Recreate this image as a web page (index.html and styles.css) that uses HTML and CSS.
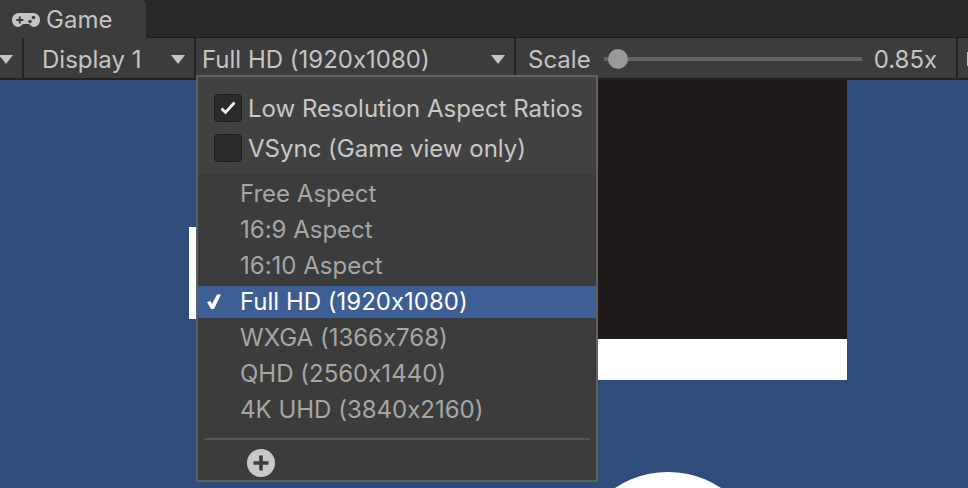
FILE: index.html
```html
<!DOCTYPE html>
<html lang="en">
<head>
    <meta charset="UTF-8">
    <title>Game</title>
    <link rel="stylesheet" href="styles.css">
</head>
<body>
    <div class="tabbar">
        <div class="tab">
            <svg class="tab-icon" width="28" height="16" viewBox="0 0 28 16">
                <path fill="#c4c4c4" d="M7 1h14c4 0 7 3 7 7s-3 7-6 7c-2 0-3-1-5-3h-6c-2 2-3 3-5 3-3 0-6-3-6-7s3-7 7-7z"/>
                <path fill="#3c3c3c" d="M6.800 4.500h2v2.500h2.500v2h-2.500v2.500h-2v-2.500h-2.500v-2h2.500z"/>
                <circle fill="#3c3c3c" cx="21.500" cy="5.500" r="1.800"/>
                <circle fill="#3c3c3c" cx="18" cy="9.500" r="1.800"/>
            </svg>
            <span>Game</span>
        </div>
    </div>

    <div class="toolbar">
        <div class="tool tool-first"><span class="arrow"></span></div>
        <div class="tool tool-display">
            <span>Display 1</span>
            <span class="arrow"></span>
        </div>
        <div class="tool tool-res">
            <span>Full HD (1920x1080)</span>
            <span class="arrow"></span>
        </div>
        <div class="tool tool-scale">
            <span>Scale</span>
            <div class="slider"><div class="slider-thumb"></div></div>
            <span>0.85x</span>
        </div>
        <div class="tool tool-last"><span class="stub"></span></div>
    </div>

    <div class="view">
        <div class="canvas">
            <div class="shape shape-bar"></div>
            <div class="shape shape-panel"></div>
            <div class="shape shape-circle"></div>
        </div>

        <div class="menu">
            <div class="menu-options">
                <div class="option">
                    <span class="checkbox">
                        <svg width="20" height="18" viewBox="0 0 20 18"><path d="M3.500 9.500l4 4 9-10" fill="none" stroke="#eeeeee" stroke-width="2.800"/></svg>
                    </span>
                    <span class="option-label">Low Resolution Aspect Ratios</span>
                </div>
                <div class="option">
                    <span class="checkbox"></span>
                    <span class="option-label">VSync (Game view only)</span>
                </div>
            </div>
            <div class="menu-list">
                <div class="item">Free Aspect</div>
                <div class="item">16:9 Aspect</div>
                <div class="item">16:10 Aspect</div>
                <div class="item item-active">
                    <svg class="item-check" width="16" height="18" viewBox="0 0 16 18"><path d="M1 9l3.500-1 1.500 3 5-9.500h4l-7 14.500h-3z" fill="#ffffff"/></svg>
                    Full HD (1920x1080)
                </div>
                <div class="item">WXGA (1366x768)</div>
                <div class="item">QHD (2560x1440)</div>
                <div class="item">4K UHD (3840x2160)</div>
            </div>
            <div class="menu-sep"></div>
            <div class="menu-add">
                <svg width="28" height="28" viewBox="0 0 28 28">
                    <circle cx="14" cy="14" r="14" fill="#c8c8c8"/>
                    <path d="M14 6.500v15M6.500 14h15" stroke="#3c3c3c" stroke-width="3.600"/>
                </svg>
            </div>
        </div>
    </div>
</body>
</html>
```

FILE: styles.css
```css
/* Общие стили */
html, body {
    margin: 0;
    height: 488px;
    overflow: hidden;
}

body {
    display: flex;
    flex-direction: column;
    background: #2f4d7a;
    font-family: 'Inter', 'Noto Sans', sans-serif;
    font-size: 24px;
    font-feature-settings: "calt" 0;
    color: #c4c4c4;
}

/* Вкладка */
.tabbar {
    height: 37px;
    background: #282828;
    border-bottom: 1px solid #1e1e1e;
    display: flex;
    flex-shrink: 0;
}

.tab {
    width: 146px;
    height: 38px;
    box-sizing: border-box;
    padding-left: 12px;
    padding-top: 2px;
    display: flex;
    align-items: center;
    gap: 6px;
    background: #3c3c3c;
    border-top-right-radius: 5px;
    line-height: 1;
}

/* Панель инструментов */
.toolbar {
    height: 40px;
    background: #3c3c3c;
    border-bottom: 2px solid #232323;
    display: flex;
    flex-shrink: 0;
}

.tool {
    display: flex;
    flex-shrink: 0;
    align-items: center;
    box-sizing: border-box;
    padding-top: 2px;
    border-right: 2px solid #232323;
}

.tool-first {
    width: 24px;
}

.tool-display {
    width: 172px;
    padding-left: 18px;
    padding-right: 9px;
    justify-content: space-between;
}

.tool-res {
    width: 320px;
    padding-left: 6px;
    padding-right: 9px;
    justify-content: space-between;
}

.tool-scale {
    width: 442px;
    padding-left: 12px;
}

.tool-last {
    flex: 1;
    flex-shrink: 1;
    border-right: none;
    padding-left: 9px;
}

.stub {
    width: 12px;
    height: 14px;
    background: #c4c4c4;
}

.arrow {
    width: 0;
    height: 0;
    border-left: 7px solid transparent;
    border-right: 7px solid transparent;
    border-top: 9px solid #c4c4c4;
}

.tool-first .arrow {
    margin-left: -1px;
}

.slider {
    width: 258px;
    height: 4px;
    margin-left: 13px;
    margin-right: 12px;
    background: #636363;
    display: flex;
    align-items: center;
}

.slider-thumb {
    width: 20px;
    height: 20px;
    margin-left: 4px;
    border-radius: 50%;
    background: #999999;
}

/* Игровой вид */
.view {
    flex: 1;
    position: relative;
}

.canvas {
    position: absolute;
    inset: 0;
    overflow: hidden;
}

.shape {
    position: absolute;
}

.shape-bar {
    left: 189px;
    top: 147px;
    width: 20px;
    height: 92px;
    background: #ffffff;
}

.shape-panel {
    left: 560px;
    top: 0;
    width: 287px;
    height: 259px;
    background: #1f1b1b;
    border-bottom: 41px solid #ffffff;
}

.shape-circle {
    left: 572px;
    top: 392px;
    width: 192px;
    height: 192px;
    border-radius: 50%;
    background: #ffffff;
}

/* Выпадающее меню */
.menu {
    position: absolute;
    left: 196px;
    top: -5px;
    width: 402px;
    height: 407px;
    box-sizing: border-box;
    border: 2px solid #606060;
    background: #3c3c3c;
}

.menu-options {
    padding: 11px 16px 0;
    height: 97px;
    box-sizing: border-box;
    background: #414141;
}

.option {
    height: 40px;
    display: flex;
    align-items: center;
    gap: 6px;
}

.checkbox {
    width: 28px;
    height: 28px;
    flex-shrink: 0;
    box-sizing: border-box;
    display: flex;
    align-items: center;
    justify-content: center;
    background: #2a2a2a;
    border: 1px solid #1e1e1e;
    border-radius: 4px;
}

.option-label {
    color: #c8c8c8;
    white-space: nowrap;
}

.menu-list {
    padding-top: 4px;
    display: flex;
    flex-direction: column;
    gap: 4px;
}

.item {
    height: 32px;
    box-sizing: border-box;
    padding-left: 42px;
    padding-bottom: 2px;
    position: relative;
    display: flex;
    align-items: center;
    color: #a6a6a6;
}

.item-active {
    background: #3e5e96;
    color: #ffffff;
}

.item-check {
    position: absolute;
    left: 8px;
    top: 7px;
}

.menu-sep {
    height: 2px;
    margin: 12px 6px 0;
    background: #555555;
}

.menu-add {
    padding: 9px 0 0 49px;
    display: flex;
}
```
